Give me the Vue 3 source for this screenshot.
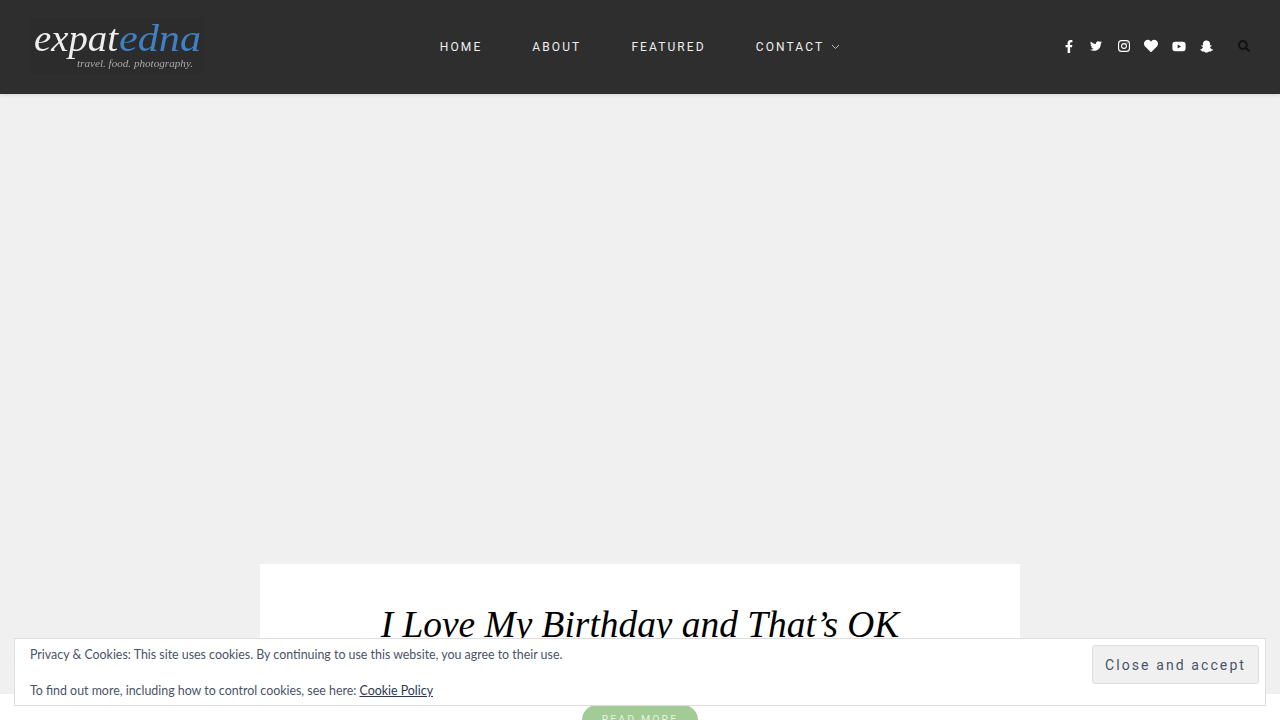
<template>
  <div class="page">
    <header class="site-header">
      <a class="logo" href="#">
        <svg width="174" height="56" viewBox="0 0 174 56">
          <text x="4" y="33" class="logo-main" textLength="84" lengthAdjust="spacingAndGlyphs">expat</text>
          <text x="89" y="33" class="logo-blue" textLength="82" lengthAdjust="spacingAndGlyphs">edna</text>
          <text x="47" y="49" class="logo-sub" textLength="116" lengthAdjust="spacingAndGlyphs">travel. food. photography.</text>
        </svg>
      </a>
      <nav class="main-nav">
        <a v-for="item in navItems" :key="item" href="#">{{ item }}</a>
        <a href="#" class="has-sub">
          CONTACT
          <svg width="9" height="6" viewBox="0 0 9 6"><path d="M1 1l3.5 3.5L8 1" fill="none" stroke="#bbb" stroke-width="1" /></svg>
        </a>
      </nav>
      <div class="social">
        <a v-for="icon in socialIcons" :key="icon.name" href="#" class="social-link">
          <svg :width="icon.w" :height="icon.h" :viewBox="icon.box"><path :d="icon.d" fill="#fff" /></svg>
        </a>
        <a href="#" class="social-link">
          <svg width="12" height="12" viewBox="0 0 12 12" fill="none" stroke="#fff">
            <rect x="0.6" y="0.6" width="10.8" height="10.8" rx="3" stroke-width="1.1" />
            <circle cx="6" cy="6" r="2.4" stroke-width="1.1" />
            <circle cx="9" cy="3" r="0.6" fill="#fff" stroke="none" />
          </svg>
        </a>
        <a v-for="icon in socialIconsAfter" :key="icon.name" href="#" class="social-link">
          <svg :width="icon.w" :height="icon.h" :viewBox="icon.box"><path :d="icon.d" fill="#fff" /></svg>
        </a>
        <a href="#" class="search-link">
          <svg width="12" height="12" viewBox="0 0 512 512"><path :d="searchPath" fill="#111" /></svg>
        </a>
      </div>
    </header>

    <main class="hero">
      <article class="post-card">
        <h2 class="post-title">I Love My Birthday and That’s OK</h2>
        <a href="#" class="read-more">READ MORE</a>
      </article>
    </main>
    <div class="band"></div>

    <div class="cookie-bar">
      <div class="cookie-text">
        <p>Privacy &amp; Cookies: This site uses cookies. By continuing to use this website, you agree to their use.</p>
        <p>To find out more, including how to control cookies, see here: <a href="#">Cookie Policy</a></p>
      </div>
      <button class="cookie-btn">Close and accept</button>
    </div>
  </div>
</template>

<script setup>
const navItems = ['HOME', 'ABOUT', 'FEATURED']

const socialIcons = [
  {
    name: 'facebook', w: 8, h: 13, box: '0 0 320 512',
    d: 'M279.14 288l14.22-92.66h-88.91v-60.13c0-25.35 12.42-50.06 52.24-50.06h40.42V6.26S260.43 0 225.36 0c-73.22 0-121.08 44.38-121.08 124.72v70.62H22.89V288h81.39v224h100.17V288z',
  },
  {
    name: 'twitter', w: 12, h: 12, box: '0 0 512 512',
    d: 'M459.37 151.716c.325 4.548.325 9.097.325 13.645 0 138.72-105.583 298.558-298.558 298.558-59.452 0-114.68-17.219-161.137-47.106 8.447.974 16.568 1.299 25.34 1.299 49.055 0 94.213-16.568 130.274-44.832-46.132-.975-84.792-31.188-98.112-72.772 6.498.974 12.995 1.624 19.818 1.624 9.421 0 18.843-1.3 27.614-3.573-48.081-9.747-84.143-51.98-84.143-102.985v-1.299c13.969 7.797 30.214 12.67 47.431 13.319-28.264-18.843-46.781-51.005-46.781-87.391 0-19.492 5.197-37.36 14.294-52.954 51.655 63.675 129.3 105.258 216.365 109.807-1.624-7.797-2.599-15.918-2.599-24.04 0-57.828 46.782-104.934 104.934-104.934 30.213 0 57.502 12.67 76.67 33.137 23.715-4.548 46.456-13.32 66.599-25.34-7.798 24.366-24.366 44.833-46.132 57.827 21.117-2.273 41.584-8.122 60.426-16.243-14.292 20.791-32.161 39.308-52.628 54.253z',
  },
]

const socialIconsAfter = [
  {
    name: 'heart', w: 14, h: 14, box: '0 0 512 512',
    d: 'M462.3 62.6C407.5 15.9 326 24.3 275.7 76.2L256 96.5l-19.7-20.3C186.1 24.3 104.5 15.9 49.7 62.6c-62.8 53.6-66.1 149.8-9.9 207.9l193.5 199.8c12.5 12.9 32.8 12.9 45.3 0l193.5-199.8c56.3-58.1 53-154.3-9.8-207.9z',
  },
  {
    name: 'youtube', w: 14, h: 13, box: '0 0 576 512',
    d: 'M549.655 124.083c-6.281-23.65-24.787-42.276-48.284-48.597C458.781 64 288 64 288 64S117.22 64 74.629 75.486c-23.497 6.322-42.003 24.947-48.284 48.597-11.412 42.867-11.412 132.305-11.412 132.305s0 89.438 11.412 132.305c6.281 23.65 24.787 41.5 48.284 47.821C117.22 448 288 448 288 448s170.78 0 213.371-11.486c23.497-6.321 42.003-24.171 48.284-47.821 11.412-42.867 11.412-132.305 11.412-132.305s0-89.438-11.412-132.305zm-317.51 213.508V175.185l142.739 81.205-142.739 81.201z',
  },
  {
    name: 'snapchat', w: 13, h: 13, box: '0 0 512 512',
    d: 'M510.846 392.673c-5.211 12.157-27.239 21.089-67.36 27.318-2.064 2.786-3.775 14.686-6.507 23.956-1.625 5.566-5.623 8.869-12.128 8.869l-.297-.005c-9.395 0-19.203-4.323-38.852-4.323-26.521 0-35.662 6.043-56.254 20.588-21.832 15.438-42.771 28.764-74.027 27.399-31.646 2.334-58.025-16.908-72.871-27.404-20.714-14.643-29.828-20.582-56.241-20.582-18.864 0-30.736 4.72-38.852 4.72-8.073 0-11.213-4.922-12.422-9.04-2.703-9.189-4.404-21.263-6.523-24.13-20.679-3.209-67.31-11.344-68.498-32.15a10.627 10.627 0 0 1 8.877-11.069c69.583-11.455 100.924-82.901 102.227-85.934.074-.176.155-.344.237-.515 3.713-7.537 4.544-13.849 2.463-18.753-5.05-11.896-26.872-16.164-36.053-19.796-23.715-9.366-27.015-20.128-25.612-27.504 2.437-12.836 21.725-20.735 33.002-15.453 8.919 4.181 16.843 6.297 23.547 6.297 5.022 0 8.212-1.204 9.96-2.171-2.043-35.936-7.101-87.29 5.687-115.969C158.122 21.304 229.705 15.42 250.826 15.42c.944 0 9.141-.089 10.11-.089 52.148 0 102.254 26.78 126.723 81.643 12.777 28.65 7.749 79.792 5.695 116.009 1.582.872 4.357 1.942 8.599 2.139 6.397-.286 13.815-2.389 22.069-6.257 6.085-2.846 14.406-2.461 20.48.058l.029.01c9.476 3.385 15.439 10.215 15.589 17.87.184 9.747-8.522 18.165-25.878 25.018-2.118.835-4.694 1.655-7.434 2.525-9.797 3.106-24.6 7.805-28.616 17.271-2.079 4.904-1.256 11.211 2.46 18.748.087.168.166.342.239.515 1.301 3.03 32.615 74.46 102.23 85.934 6.427 1.058 11.163 7.877 7.725 15.859z',
  },
]

const searchPath = 'M505 442.7L405.3 343c-4.5-4.5-10.6-7-17-7H372c27.6-35.3 44-79.7 44-128C416 93.1 322.9 0 208 0S0 93.1 0 208s93.1 208 208 208c48.3 0 92.7-16.4 128-44v16.3c0 6.4 2.5 12.5 7 17l99.7 99.7c9.4 9.4 24.6 9.4 33.9 0l28.3-28.3c9.4-9.4 9.4-24.6.1-34zM208 336c-70.7 0-128-57.2-128-128 0-70.7 57.2-128 128-128 70.7 0 128 57.2 128 128 0 70.7-57.2 128-128 128z'
</script>

<style>
html, body {
  overflow: hidden;
}
</style>

<style scoped>
.page {
  width: 1280px;
  height: 720px;
  overflow: hidden;
  background: #fff;
  font-family: "Lato", sans-serif;
}

.site-header {
  position: relative;
  z-index: 2;
  display: grid;
  grid-template-columns: 1fr auto 1fr;
  align-items: center;
  height: 94px;
  padding: 0 30px;
  box-sizing: border-box;
  background: #2e2e2e;
  box-shadow: 0 1px 4px rgba(0, 0, 0, 0.12);
}

.logo {
  display: block;
  width: 174px;
  height: 56px;
  margin-top: -2px;
  background: #2c2c2c;
}

.logo svg {
  display: block;
  filter: blur(0.4px);
}

.logo-main,
.logo-blue,
.logo-sub {
  font-family: "Liberation Serif", serif;
  font-style: italic;
}

.logo-main {
  font-size: 38px;
  fill: #eee;
}

.logo-blue {
  font-size: 38px;
  fill: #3f81c4;
}

.logo-sub {
  font-size: 11px;
  fill: #aaa;
}

.main-nav {
  display: flex;
  align-items: center;
  gap: 50px;
  margin-top: -1px;
}

.main-nav a {
  display: flex;
  align-items: center;
  gap: 7px;
  color: #eee;
  font-family: "Roboto", sans-serif;
  font-size: 12px;
  letter-spacing: 2.1px;
  text-decoration: none;
}

.social {
  display: flex;
  align-items: center;
  justify-content: flex-end;
  margin-top: -2px;
}

.social-link {
  display: flex;
  justify-content: center;
  width: 27.5px;
}

.search-link {
  display: flex;
  margin-left: 18px;
}

.hero {
  height: 600px;
  padding-top: 470px;
  box-sizing: border-box;
  background: #f0f0f0;
}

.post-card {
  width: 760px;
  height: 300px;
  margin: 0 auto;
  padding-top: 38px;
  box-sizing: border-box;
  background: #fff;
  text-align: center;
}

.post-title {
  margin: 0 0 57px;
  color: #000;
  font-family: "Liberation Serif", serif;
  font-size: 37.4px;
  font-style: italic;
  font-weight: 400;
  line-height: 46px;
}

.read-more {
  display: inline-block;
  width: 116px;
  height: 30px;
  border-radius: 15px;
  background: #a2cb95;
  color: #e6f2e1;
  font-family: "Roboto", sans-serif;
  font-size: 10.5px;
  letter-spacing: 2.1px;
  line-height: 30px;
  text-decoration: none;
}

.band {
  height: 26px;
}

.cookie-bar {
  position: fixed;
  left: 14px;
  top: 638px;
  z-index: 5;
  display: flex;
  justify-content: space-between;
  width: 1252px;
  height: 68px;
  padding: 6px 6px 0 15px;
  box-sizing: border-box;
  border: 1px solid #dedede;
  background: #fff;
}

.cookie-text {
  padding-top: 1px;
  color: #4a5366;
  font-size: 12.4px;
  line-height: 18px;
}

.cookie-text p {
  margin: 0 0 18px;
}

.cookie-text a {
  color: #2e3650;
}

.cookie-btn {
  width: 167px;
  height: 39px;
  padding: 0;
  border: 1px solid #dedede;
  border-radius: 3px;
  background: #f0f0f0;
  color: #4a5366;
  font-family: "Roboto", sans-serif;
  font-size: 14px;
  letter-spacing: 2.1px;
}
</style>
